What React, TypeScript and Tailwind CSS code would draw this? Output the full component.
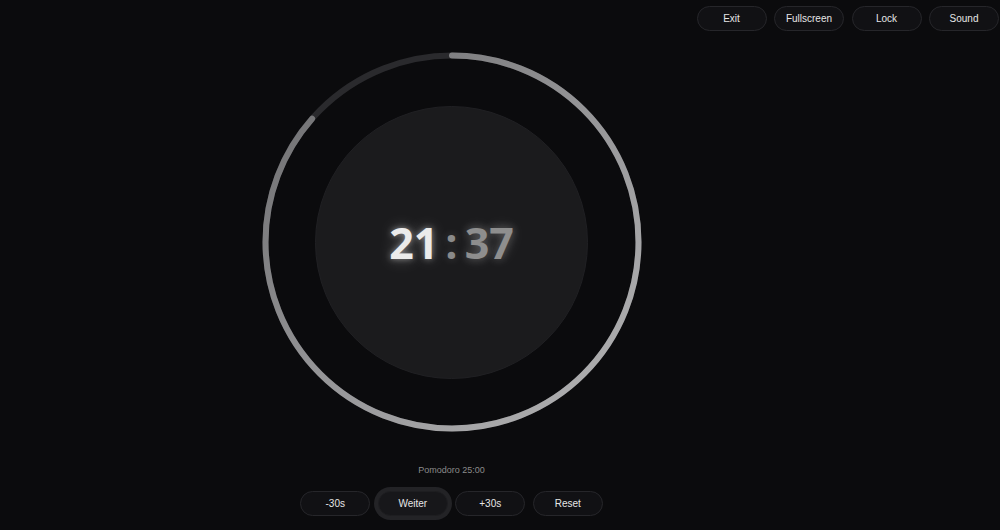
import React from "react";

const font = { fontFamily: '"Liberation Sans", Arial, sans-serif' };

function Pill({ label, active }: { label: string; active?: boolean }) {
  return (
    <button
      className={
        "w-[70px] h-[25px] rounded-full flex items-center justify-center text-[10px] text-[#e6e6e6] " +
        (active
          ? "bg-[#17171a] border border-[#1e1e21] ring-4 ring-[#232326]"
          : "bg-[#111114] border border-[#26262a]")
      }
      style={font}
    >
      {label}
    </button>
  );
}

export default function App() {
  const size = 380;
  const c = size / 2;
  const r = 186.5;
  const circ = 2 * Math.PI * r;
  const remaining = 1297 / 1500;
  return (
    <div className="w-[1000px] h-[530px] bg-[#0b0b0d] flex flex-col overflow-hidden" style={font}>
      <div className="flex justify-end gap-[7.5px] pt-[6px] pr-px">
        <Pill label="Exit" />
        <Pill label="Fullscreen" />
        <Pill label="Lock" />
        <Pill label="Sound" />
      </div>
      <div className="w-[903px] flex flex-col items-center">
        <div className="relative w-[380px] h-[380px] mt-[21px] flex items-center justify-center">
          <svg className="absolute inset-0" width={size} height={size} viewBox={`0 0 ${size} ${size}`}>
            <defs>
              <linearGradient id="g" x1="1" y1="0" x2="0" y2="1">
                <stop offset="0" stopColor="#6a6a6c" />
                <stop offset="0.5" stopColor="#959597" />
                <stop offset="1" stopColor="#b4b4b5" />
              </linearGradient>
            </defs>
            <circle cx={c} cy={c} r={r} fill="none" stroke="#2a2a2d" strokeWidth={6} />
            <circle
              cx={c}
              cy={c}
              r={r}
              fill="none"
              stroke="url(#g)"
              strokeWidth={6}
              strokeLinecap="round"
              strokeDasharray={`${circ * remaining} ${circ}`}
              transform={`rotate(-90 ${c} ${c})`}
            />
          </svg>
          <div className="relative w-[273px] h-[273px] rounded-full bg-[#1b1b1d] border border-[#202023] flex items-center justify-center">
            <div
              className="flex items-center text-[43px] font-bold leading-none"
              style={{ fontFamily: '"Open Sans", sans-serif' }}
            >
              <span className="text-[#ebebeb] [text-shadow:0_0_6px_rgba(255,255,255,0.45),0_0_16px_rgba(255,255,255,0.25)]">21</span>
              <span className="text-[#8a8a8a] mx-[7px] [text-shadow:0_0_10px_rgba(255,255,255,0.2)]">:</span>
              <span className="text-[#8e8e8e] [text-shadow:0_0_8px_rgba(255,255,255,0.25),0_0_16px_rgba(255,255,255,0.15)]">37</span>
            </div>
          </div>
        </div>
        <div className="mt-[32px] text-[9px] leading-[12px] text-[#8a8a8a]">Pomodoro 25:00</div>
        <div className="mt-[15px] flex gap-[7.5px]">
          <Pill label="-30s" />
          <Pill label="Weiter" active />
          <Pill label="+30s" />
          <Pill label="Reset" />
        </div>
      </div>
    </div>
  );
}
